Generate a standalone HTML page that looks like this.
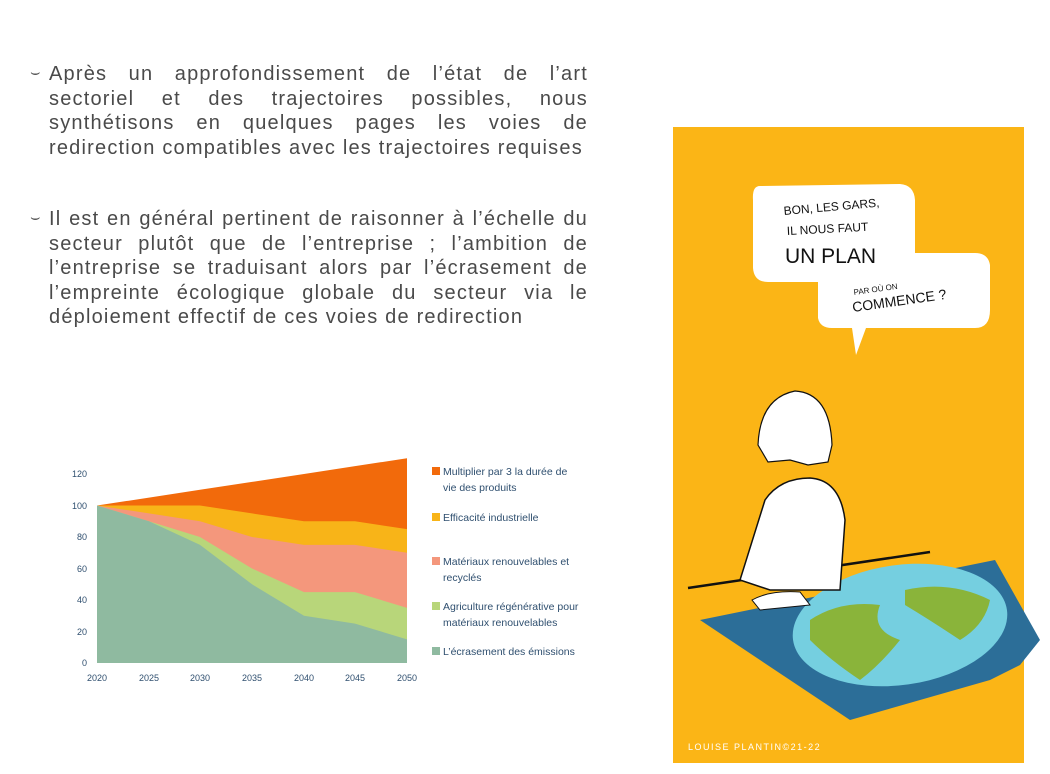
<!DOCTYPE html>
<html><head><meta charset="utf-8"><style>
body{margin:0;width:1050px;height:774px;background:#fff;position:relative;overflow:hidden;font-family:"Liberation Sans",sans-serif}
.p{position:absolute;left:49px;width:539px;font-size:20px;line-height:24.5px;color:#4a4a4a;letter-spacing:1.2px}
.p div{white-space:nowrap;text-align:justify;text-align-last:justify}
.p div.l{text-align-last:left}
.b{position:absolute;left:30px;font-size:16px;color:#555}
</style></head><body>
<div class="b" style="top:64px">⌣</div>
<div class="p" style="top:62px"><div>Après un approfondissement de l’état de l’art</div><div>sectoriel et des trajectoires possibles, nous</div><div>synthétisons en quelques pages les voies de</div><div class="l">redirection compatibles avec les trajectoires requises</div></div>
<div class="b" style="top:209px">⌣</div>
<div class="p" style="top:207px"><div>Il est en général pertinent de raisonner à l’échelle du</div><div>secteur plutôt que de l’entreprise ; l’ambition de</div><div>l’entreprise se traduisant alors par l’écrasement de</div><div>l’empreinte écologique globale du secteur via le</div><div class="l">déploiement effectif de ces voies de redirection</div></div>

<svg style="position:absolute;left:0;top:0" width="1050" height="774">
<g font-family="Liberation Sans" font-size="9" fill="#2f4f6f">
<polygon fill="#f26a0b" points="97,505.5 149,497.6 200,489.8 252,481.9 304,474 355,466.1 407,458.3 407,663 97,663"/>
<polygon fill="#f8b418" points="97,505.5 149,505.5 200,505.5 252,513.4 304,521.3 355,521.3 407,529.1 407,663 97,663"/>
<polygon fill="#f4977c" points="97,505.5 149,513.4 200,521.3 252,537 304,544.9 355,544.9 407,552.8 407,663 97,663"/>
<polygon fill="#b8d67a" points="97,505.5 149,521.3 200,537 252,568.5 304,592.1 355,592.1 407,607.9 407,663 97,663"/>
<polygon fill="#8fbaa0" points="97,505.5 149,521.3 200,544.9 252,584.3 304,615.8 355,623.6 407,639.4 407,663 97,663"/>
<g text-anchor="end"><text x="87" y="477">120</text><text x="87" y="509">100</text><text x="87" y="540">80</text><text x="87" y="572">60</text><text x="87" y="603">40</text><text x="87" y="635">20</text><text x="87" y="666">0</text></g>
<g text-anchor="middle"><text x="97" y="681">2020</text><text x="149" y="681">2025</text><text x="200" y="681">2030</text><text x="252" y="681">2035</text><text x="304" y="681">2040</text><text x="355" y="681">2045</text><text x="407" y="681">2050</text></g>
<g font-size="10.5">
<rect x="432" y="467" width="8" height="8" fill="#f26a0b"/><text x="443" y="475">Multiplier par 3 la durée de</text><text x="443" y="491">vie des produits</text>
<rect x="432" y="513" width="8" height="8" fill="#f8b418"/><text x="443" y="521">Efficacité industrielle</text>
<rect x="432" y="557" width="8" height="8" fill="#f4977c"/><text x="443" y="565">Matériaux renouvelables et</text><text x="443" y="581">recyclés</text>
<rect x="432" y="602" width="8" height="8" fill="#b8d67a"/><text x="443" y="610">Agriculture régénérative pour</text><text x="443" y="626">matériaux renouvelables</text>
<rect x="432" y="647" width="8" height="8" fill="#8fbaa0"/><text x="443" y="655">L’écrasement des émissions</text>
</g></g>

<rect x="673" y="127" width="351" height="636" fill="#fbb516"/>
<path d="M760 186 Q752 186 753 200 L753 268 Q754 282 768 282 L818 282 L818 318 Q820 328 832 328 L852 328 L856 355 L866 328 L975 328 Q990 328 990 310 L990 265 Q988 253 975 253 L915 253 L915 200 Q914 185 900 184 Z" fill="#fff"/>
<g font-family="Liberation Sans" fill="#111">
<text x="784" y="215" font-size="12" transform="rotate(-5 784 215)">BON, LES GARS,</text>
<text x="787" y="235" font-size="12" transform="rotate(-3 787 235)">IL NOUS FAUT</text>
<text x="785" y="263" font-size="21">UN PLAN</text>
<text x="854" y="295" font-size="8" transform="rotate(-8 854 295)">PAR OÙ ON</text>
<text x="853" y="312" font-size="14" transform="rotate(-8 853 312)">COMMENCE ?</text>
</g>
<path d="M688 588 L930 552" stroke="#111" stroke-width="2.5"/>
<path d="M700 620 L995 560 L1040 640 L1020 665 L990 680 L850 720 Z" fill="#2c6e98"/>
<ellipse cx="900" cy="625" rx="108" ry="60" fill="#75cfe0" transform="rotate(-8 900 625)"/>
<path d="M810 620 Q840 600 880 605 Q870 630 900 640 Q880 665 860 680 Q830 660 810 640 Z M905 590 Q950 580 990 600 Q985 625 960 640 Q930 620 905 605 Z" fill="#8ab43a"/>
<path d="M765 500 Q780 478 810 478 Q840 480 845 520 L840 590 L770 590 L740 580 Z" fill="#fff" stroke="#111" stroke-width="1.5"/>
<path d="M758 445 Q760 398 795 391 Q830 393 832 445 L828 462 L808 465 L790 460 L768 462 Z" fill="#fff" stroke="#111" stroke-width="1.2"/>
<path d="M752 600 Q770 590 800 592 L810 605 L760 610 Z" fill="#fff" stroke="#111" stroke-width="1"/>
<text x="688" y="750" font-family="Liberation Sans" font-size="9" fill="#fff" letter-spacing="1.5">LOUISE PLANTIN©21-22</text>
</svg>
</body></html>
